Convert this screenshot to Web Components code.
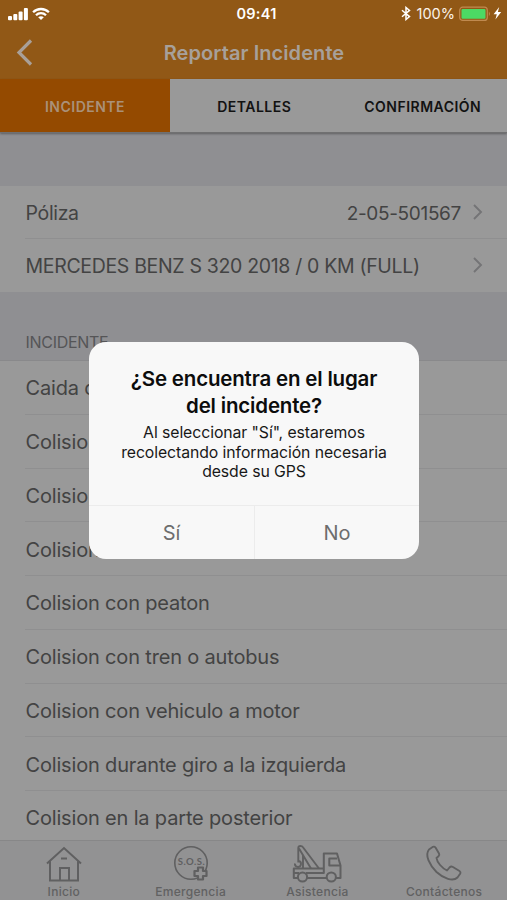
<!DOCTYPE html>
<html lang="es">
<head>
<meta charset="utf-8">
<title>Reportar Incidente</title>
<style>
html,body{margin:0;padding:0}
body{width:507px;height:900px;overflow:hidden;background:#999;font-family:Inter,"Liberation Sans",sans-serif;color:#434343}
</style>
</head>
<body>
<incident-app></incident-app>
<script>
function define(name, html) {
  const t = document.createElement('template');
  t.innerHTML = html;
  customElements.define(name, class extends HTMLElement {
    constructor() {
      super();
      this.attachShadow({mode: 'open'}).appendChild(t.content.cloneNode(true));
    }
  });
}

define('status-bar', `
<style>
:host{display:grid;grid-template-columns:1fr auto 1fr;align-items:center;height:27px;color:#fff;padding:0 5px 0 8px;box-sizing:border-box}
svg{display:block}
.time{font-size:14.5px;font-weight:600;letter-spacing:.25px;padding-left:3px}
.l{display:flex;gap:3px;align-items:center}
.r{display:flex;align-items:center;justify-content:flex-end}
.pct{font-size:14.5px;letter-spacing:0;margin:0 4px 0 6px;color:#fbf3ea}
</style>
<div class="l">
<svg width="21" height="14" viewBox="0 0 21 14" fill="#fff"><rect x="0" y="9" width="4" height="4.3" rx="1"/><rect x="5.3" y="7" width="4" height="6.3" rx="1"/><rect x="10.6" y="4.5" width="4" height="8.800" rx="1"/><rect x="15.900" y="1" width="4" height="12.300" rx="1"/></svg>
<svg width="18" height="14" viewBox="0 0 18 14" fill="none" stroke="#fff" stroke-width="2.300"><path d="M1.100 5.200C5.500.9 12.500.9 16.900 5.200"/><path d="M4 8.300C6.800 5.500 11.200 5.500 14 8.300"/><path d="M9 13 6.200 10.200C7.800 8.800 10.200 8.800 11.800 10.200Z" fill="#fff" stroke="none"/></svg>
</div>
<span class="time">09:41</span>
<div class="r">
<svg width="10" height="15" viewBox="0 0 10 15" fill="none" stroke="#fff" stroke-width="1.500"><path d="M1 4.200 8.500 10.600 5 13.500V1.500L8.500 4.400 1 10.800"/></svg>
<span class="pct">100%</span>
<svg width="33" height="16" viewBox="0 0 33 16"><rect x=".7" y="1.200" width="27.600" height="13.200" rx="3" fill="none" stroke="#c08a50" stroke-width="1.200"/><rect x="2.500" y="3" width="24" height="9.700" rx="1" fill="#4cd964"/><path d="M29.900 5.500Q32 7.800 29.900 10Z" fill="#c08a50"/></svg>
<svg width="9" height="13" viewBox="0 0 9 13" style="margin-left:1px"><path d="M6.200 0 .6 7.300H3.800L2.400 12.500 8.200 5.100H4.900Z" fill="#fff"/></svg>
</div>`);

define('nav-bar', `
<style>
:host{display:grid;grid-template-columns:60px 1fr 60px;align-items:center;height:52px;color:#a7a09a}
svg{display:block;margin-left:15px}
h1{margin:0;font-size:20px;font-weight:600;text-align:center;letter-spacing:.08px;padding-left:1px}
</style>
<svg width="20" height="30" viewBox="0 0 20 30" fill="none" stroke="#a9a098" stroke-width="3.200"><path d="M16 2.500 4 14.500 16 26.500"/></svg>
<h1><slot></slot></h1>`);

define('step-tabs', `
<style>
:host{display:grid;grid-template-columns:170px 1fr 1fr;height:54px;background:#999;border-bottom:1px solid #707071;box-shadow:0 1px 2px #0005;box-sizing:border-box;position:relative}
</style><slot></slot>`);

define('step-tab', `
<style>
:host{display:flex;align-items:center;justify-content:center;font-size:14px;font-weight:600;letter-spacing:.48px;color:#121212;padding-top:1px}
:host([active]){background:#944a00;color:#aa9179}
</style><slot></slot>`);

define('list-row', `
<style>
:host{display:flex;align-items:stretch;height:53.75px;padding-left:25px;background:#999;font-size:20px;letter-spacing:-.17px}
.in{flex:1;display:flex;align-items:center;border-bottom:1px solid #8f8f90;padding:0 23px 0 .5px;white-space:nowrap}
.in>span{padding-top:2px}
:host([last]) .in{border-color:transparent}
:host([link]){font-size:19.500px;letter-spacing:-.33px}
.v{margin-left:auto;font-size:19px}
svg{display:none;margin-left:10px}
:host([link]) svg{display:block}
</style>
<div class="in"><span><slot></slot></span><span class="v"><slot name="value"></slot></span>
<svg width="13" height="18" viewBox="0 0 13 18" fill="none" stroke="#747476" stroke-width="1.900"><path d="M3 2 10 9 3 16"/></svg></div>`);

define('list-head', `
<style>
:host{display:flex;align-items:flex-end;box-sizing:border-box;height:69px;padding:0 25px 8px 25.500px;background:#8f8f92;color:#555557;font-size:16px;letter-spacing:-.3px;border-bottom:1px solid #89898b}
</style><slot></slot>`);

define('bottom-bar', `
<style>
:host{display:grid;grid-template-columns:repeat(4,1fr);height:60px;background:#929293;border-top:1px solid #878788;box-sizing:border-box;position:absolute;left:0;right:0;bottom:0}
</style><slot></slot>`);

define('bar-item', `
<style>
:host{display:flex;flex-direction:column;align-items:center;color:#616162;font-size:12px;font-weight:500;letter-spacing:.3px;line-height:15px;padding:3px 0 0 1px}
::slotted(svg){display:block;margin-bottom:1px;overflow:visible}
</style><slot name="icon"></slot><span><slot></slot></span>`);

define('alert-dialog', `
<style>
:host{display:flex;flex-direction:column;position:absolute;left:89px;top:342px;width:330px;height:217px;box-sizing:border-box;border-radius:17px;background:#f8f8f8;color:#0c0c0c;text-align:center;overflow:hidden}
.body{flex:1;padding-top:23px}
h2{margin:0;font-size:20.500px;line-height:27px;font-weight:600;letter-spacing:-.18px;white-space:nowrap}
p{margin:4px 0 0;font-size:15.800px;line-height:19.500px;letter-spacing:-.08px;color:#181818;white-space:nowrap}
.actions{display:grid;grid-template-columns:1fr 1fr;height:53px;border-top:1px solid #ececec}
.actions span{display:flex;align-items:center;justify-content:center;font-size:20px;color:#6d6d6d;padding-top:1px}
.actions span+span{border-left:1px solid #ececec}
</style>
<div class="body"><h2><slot name="title"></slot></h2><p><slot></slot></p></div>
<div class="actions"><span><slot name="yes"></slot></span><span><slot name="no"></slot></span></div>`);

define('incident-app', `
<style>
:host{display:block;position:relative;width:507px;height:900px;overflow:hidden;background:#999}
header{background:#915816}
.gap{height:53px;background:#8f8f92}
.policy list-row{height:53px}
.tight{letter-spacing:-.75px}
</style>
<header><status-bar></status-bar><nav-bar>Reportar Incidente</nav-bar></header>
<step-tabs><step-tab active>INCIDENTE</step-tab><step-tab>DETALLES</step-tab><step-tab>CONFIRMACIÓN</step-tab></step-tabs>
<div class="gap"></div>
<div class="policy">
<list-row link>Póliza<span slot="value">2-05-501567</span></list-row>
<list-row link last>MERCEDES BENZ S 320 2018 / 0 KM (FULL)</list-row>
</div>
<list-head>INCIDENTE</list-head>
<list-row>Caida de</list-row>
<list-row>Colision</list-row>
<list-row>Colision</list-row>
<list-row>Colision</list-row>
<list-row>Colision con peaton</list-row>
<list-row>Colision con tren o autobus</list-row>
<list-row>Colision con vehiculo a motor</list-row>
<list-row>Colision durante giro a la izquierda</list-row>
<list-row>Colision en la parte posterior</list-row>
<bottom-bar>
<bar-item><svg slot="icon" width="38" height="39" viewBox="0 0 38 39" fill="none" stroke="#606061" stroke-width="2"><path d="M2 19.500 19 4 36 19.500M5 17.500V36.500H33V17.500M15 36V24H24V36M16 14.500H22"/></svg>Inicio</bar-item>
<bar-item><svg slot="icon" width="38" height="39" viewBox="0 0 38 39" fill="none" stroke="#606061" stroke-width="1.600"><circle cx="19" cy="19" r="16.200"/><text x="19.500" y="20.500" text-anchor="middle" font-family="Lato" font-size="9.500" font-weight="700" letter-spacing=".5" fill="#606061" stroke="none">S.O.S.</text><path d="M26 23.500h5v3.500h3.500v5H31V35.500h-5v-3.500h-3.500v-5H26Z" fill="#929293" stroke-width="2.200" stroke-linejoin="round"/></svg>Emergencia</bar-item>
<bar-item><svg slot="icon" width="50" height="39" viewBox="0 0 50 39" fill="none" stroke="#606061" stroke-width="2" stroke-linejoin="round"><path d="M6 34H1.800V24.500H31.800V9.500H45L48.500 21.500V34H44M15 34H34.500M2 29H7M14 29H31.800V24.500"/><circle cx="10.500" cy="33" r="4.600"/><circle cx="39.300" cy="33" r="4.600"/><path d="M45 14.500H37.300V21.500H48"/><path d="M6.300 16V4Q6.300 2 8.500 2T11.500 4L27 24.500M7 4.500 19 24.500M11 11V24.500M6.300 16V18.500M3 19.500A3 3 0 1 0 6.500 17" stroke-width="1.900"/></svg>Asistencia</bar-item>
<bar-item><svg slot="icon" width="38" height="39" viewBox="0 0 38 39" fill="none" stroke="#606061" stroke-width="1.900" stroke-linejoin="round"><path d="M4 5.500 8 2.800Q9.500 2.300 10.500 3.500L14 9.500Q14.800 11 13.500 12.200L11.500 14C12 18.500 17 24 22 26.500L24.500 23.500Q26 22 27.500 22.800L34.500 27Q36 28 35.300 29.500L32.500 33.500C28 38 18.500 34.500 11.500 28C4.500 21 -.5 11 4 5.500Z"/></svg>Contáctenos</bar-item>
</bottom-bar>
<alert-dialog><span slot="title">¿Se encuentra en el lugar<br>del incidente?</span>Al seleccionar "Sí", estaremos<br>recolectando información necesaria<br>desde su GPS<span slot="yes">Sí</span><span slot="no">No</span></alert-dialog>`);
</script>
</body>
</html>
